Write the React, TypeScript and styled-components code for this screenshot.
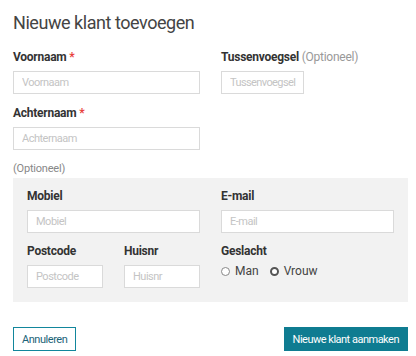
import React from "react";
import styled, { createGlobalStyle } from "styled-components";

const GlobalStyle = createGlobalStyle`
  html, body {
    margin: 0;
    padding: 0;
    background: #ffffff;
  }
  body {
    font-family: Roboto, "Liberation Sans", Arial, sans-serif;
    color: #333;
  }
  * {
    box-sizing: border-box;
  }
`;

export default function App() {
  return (
    <>
      <GlobalStyle />
      <Dialog>
        <Title>Nieuwe klant toevoegen</Title>

        <TopGrid>
          <Field>
            <Label>
              Voornaam <Required>*</Required>
            </Label>
            <Input placeholder="Voornaam" />
          </Field>
          <Field>
            <Label>
              Tussenvoegsel <Muted>(Optioneel)</Muted>
            </Label>
            <Input placeholder="Tussenvoegsel" $width={83} $compact />
          </Field>
          <Field>
            <Label>
              Achternaam <Required>*</Required>
            </Label>
            <Input placeholder="Achternaam" />
          </Field>
        </TopGrid>

        <OptionalNote>(Optioneel)</OptionalNote>

        <Panel>
          <Field>
            <Label>Mobiel</Label>
            <Input placeholder="Mobiel" />
          </Field>
          <Field>
            <Label>E-mail</Label>
            <Input placeholder="E-mail" />
          </Field>
          <SplitRow>
            <Field>
              <Label>Postcode</Label>
              <Input placeholder="Postcode" />
            </Field>
            <Field>
              <Label>Huisnr</Label>
              <Input placeholder="Huisnr" />
            </Field>
          </SplitRow>
          <Field>
            <Label>Geslacht</Label>
            <RadioGroup>
              <RadioOption>
                <RadioDot />
                Man
              </RadioOption>
              <RadioOption>
                <RadioDot $active />
                Vrouw
              </RadioOption>
            </RadioGroup>
          </Field>
        </Panel>

        <Footer>
          <OutlineButton>Annuleren</OutlineButton>
          <PrimaryButton>Nieuwe klant aanmaken</PrimaryButton>
        </Footer>
      </Dialog>
    </>
  );
}

const Dialog = styled.div`
  width: 416px;
  height: 356px;
  padding: 12px 8px 0 13px;
  display: flex;
  flex-direction: column;
`;

const Title = styled.h2`
  margin: 0;
  font-size: 18px;
  line-height: 21px;
  font-weight: 400;
  letter-spacing: -0.45px;
  color: #444;
`;

const TopGrid = styled.div`
  margin-top: 17px;
  display: grid;
  grid-template-columns: 187px 1fr;
  column-gap: 21px;
  row-gap: 12px;
`;

const Field = styled.div`
  display: flex;
  flex-direction: column;
`;

const Label = styled.label`
  font-size: 12px;
  line-height: 14px;
  font-weight: 700;
  letter-spacing: -0.25px;
  color: #333;
  margin-bottom: 7px;
  white-space: nowrap;
`;

const Required = styled.span`
  color: #e8413b;
`;

const Muted = styled.span`
  font-weight: 400;
  color: #999;
`;

const Input = styled.input<{ $width?: number; $compact?: boolean }>`
  width: ${(p) => (p.$width ? `${p.$width}px` : "100%")};
  height: 23px;
  border: 1px solid #dadada;
  background: #fff;
  padding: ${(p) => (p.$compact ? "0 1px 0 8px" : "0 8px")};
  font-family: Roboto, "Liberation Sans", Arial, sans-serif;
  font-size: 11px;
  letter-spacing: ${(p) => (p.$compact ? "-0.6px" : "-0.5px")};
  color: #333;
  outline: none;

  &::placeholder {
    color: #c4c4c4;
  }
`;

const OptionalNote = styled.div`
  margin-top: 12px;
  font-size: 11px;
  line-height: 13px;
  letter-spacing: -0.2px;
  color: #888;
`;

const Panel = styled.div`
  margin-top: 3px;
  background: #f2f2f2;
  padding: 11px 14px 14px;
  display: grid;
  grid-template-columns: 173px 173px;
  column-gap: 21px;
  row-gap: 11px;
`;

const SplitRow = styled.div`
  display: grid;
  grid-template-columns: 1fr 1fr;
  column-gap: 21px;
`;

const RadioGroup = styled.div`
  display: flex;
  align-items: center;
  gap: 11px;
  height: 16px;
  margin-top: -2px;
`;

const RadioOption = styled.span`
  display: inline-flex;
  align-items: center;
  gap: 5px;
  font-size: 12px;
  color: #444;
`;

const RadioDot = styled.span<{ $active?: boolean }>`
  width: 9px;
  height: 9px;
  border-radius: 50%;
  background: #fff;
  border: ${(p) => (p.$active ? "2px solid #555" : "1px solid #888")};
`;

const Footer = styled.div`
  margin-top: 25px;
  display: flex;
  justify-content: space-between;
  align-items: center;
`;

const OutlineButton = styled.button`
  height: 24px;
  padding: 0 8px;
  background: #fff;
  border: 1px solid #12869c;
  color: #1b6478;
  font-family: Roboto, "Liberation Sans", Arial, sans-serif;
  font-size: 11px;
  letter-spacing: -0.45px;
  cursor: pointer;
`;

const PrimaryButton = styled.button`
  height: 24px;
  padding: 0 8px;
  background: #0f7c91;
  border: 1px solid #0f7c91;
  color: #fff;
  font-family: Roboto, "Liberation Sans", Arial, sans-serif;
  font-size: 11px;
  letter-spacing: -0.5px;
  cursor: pointer;
`;
